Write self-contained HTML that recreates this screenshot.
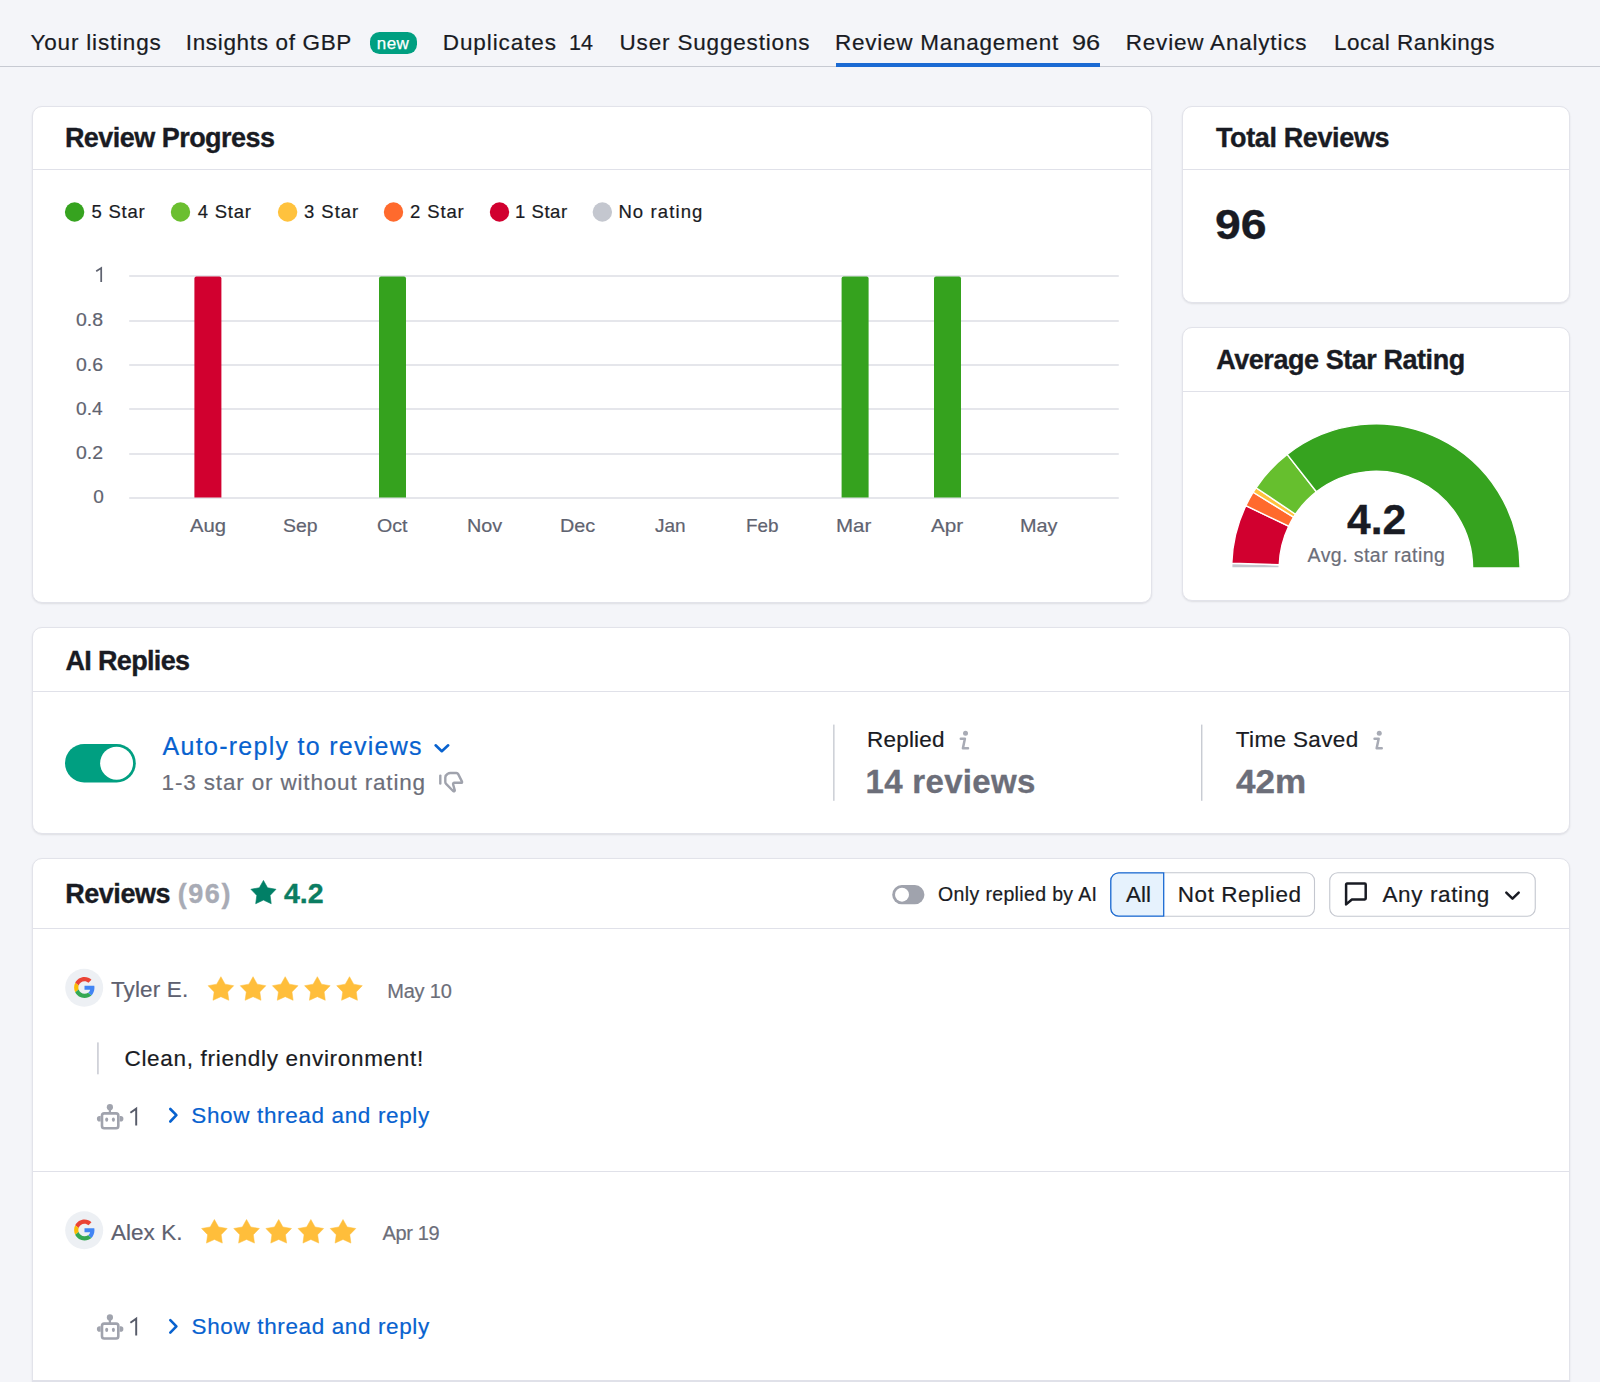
<!DOCTYPE html><html><head><meta charset="utf-8"><style>*{box-sizing:border-box;margin:0;padding:0}html,body{width:1600px;height:1382px;overflow:hidden;background:#f4f5f9;font-family:"Liberation Sans",sans-serif;color:#191b23}.b{position:absolute}.t{position:absolute;white-space:nowrap;line-height:1;font-family:"Liberation Sans",sans-serif}.card{position:absolute;background:#fff;border:1px solid #e2e3ea;border-radius:10px;box-shadow:0 1px 2px rgba(25,27,35,.10)}.hl{position:absolute;height:1px;background:#e0e1e9}svg{position:absolute;left:0;top:0;overflow:visible}</style></head><body>
<div class="b" style="left:0;top:66px;width:1600px;height:1px;background:#c7cad2"></div>
<div class="b" style="left:835.5px;top:63px;width:264px;height:4px;background:#1a6ad3"></div>
<div class="b" style="left:370.4px;top:32.1px;width:46.5px;height:22.0px;border-radius:9.5px;background:#009f81"></div>
<div class="card" style="left:32px;top:106px;width:1120px;height:497px"></div>
<div class="hl" style="left:33px;top:169px;width:1118px"></div>
<div class="card" style="left:1182px;top:106px;width:388px;height:197px"></div>
<div class="hl" style="left:1183px;top:169px;width:386px"></div>
<div class="card" style="left:1182px;top:327px;width:388px;height:274px"></div>
<div class="hl" style="left:1183px;top:391px;width:386px"></div>
<div class="card" style="left:32px;top:627px;width:1538px;height:207px"></div>
<div class="hl" style="left:33px;top:691px;width:1536px"></div>
<div class="card" style="left:32px;top:858px;width:1538px;height:523px;border-radius:10px 10px 0 0"></div>
<div class="hl" style="left:33px;top:928px;width:1536px"></div>
<div class="hl" style="left:33px;top:1171px;width:1536px"></div>
<div class="b" style="left:32px;top:1380px;width:1538px;height:2px;background:#e0e1e9"></div>
<svg width="1600" height="1382" viewBox="0 0 1600 1382">
<circle cx="74.6" cy="212" r="9.7" fill="#36a31f"/>
<circle cx="180.5" cy="212" r="9.7" fill="#6bbf30"/>
<circle cx="287.6" cy="212" r="9.7" fill="#ffc23d"/>
<circle cx="393.5" cy="212" r="9.7" fill="#ff6a2d"/>
<circle cx="499.5" cy="212" r="9.7" fill="#d1002f"/>
<circle cx="602.35" cy="212" r="9.7" fill="#c4c7cf"/>
<path d="M96.2,271.3 L101.2,268.1 V281.9" fill="none" stroke="#5f6370" stroke-width="1.75" stroke-linejoin="miter"/>
<path d="M130.4,1112.8 L136.2,1108.6 V1125.6" fill="none" stroke="#575b69" stroke-width="1.95"/>
<path d="M130.4,1322.8 L136.2,1318.6 V1335.6" fill="none" stroke="#575b69" stroke-width="1.95"/>
<line x1="129.2" x2="1118.75" y1="276.0" y2="276.0" stroke="#dcdee5" stroke-width="1.3"/>
<line x1="129.2" x2="1118.75" y1="321.0" y2="321.0" stroke="#dcdee5" stroke-width="1.3"/>
<line x1="129.2" x2="1118.75" y1="365.0" y2="365.0" stroke="#dcdee5" stroke-width="1.3"/>
<line x1="129.2" x2="1118.75" y1="409.0" y2="409.0" stroke="#dcdee5" stroke-width="1.3"/>
<line x1="129.2" x2="1118.75" y1="454.0" y2="454.0" stroke="#dcdee5" stroke-width="1.3"/>
<line x1="129.2" x2="1118.75" y1="498.0" y2="498.0" stroke="#dcdee5" stroke-width="1.3"/>
<path d="M194.4,497.5 V278.5 a2,2 0 0 1 2,-2 H219.4 a2,2 0 0 1 2,2 V497.5 Z" fill="#d1002f"/>
<path d="M379.0,497.5 V278.5 a2,2 0 0 1 2,-2 H404.0 a2,2 0 0 1 2,2 V497.5 Z" fill="#35a21e"/>
<path d="M841.6,497.5 V278.5 a2,2 0 0 1 2,-2 H866.6 a2,2 0 0 1 2,2 V497.5 Z" fill="#35a21e"/>
<path d="M934.0,497.5 V278.5 a2,2 0 0 1 2,-2 H959.0 a2,2 0 0 1 2,2 V497.5 Z" fill="#35a21e"/>
<g stroke="#fff" stroke-width="1.4" stroke-linejoin="miter">
<path d="M1231.70,568.00 A144.2,144.2 0 0 1 1231.78,563.22 L1279.25,564.79 A96.7,96.7 0 0 0 1279.20,568.00 Z" fill="#c4c7cf"/>
<path d="M1231.78,563.22 A144.2,144.2 0 0 1 1245.86,505.69 L1288.69,526.22 A96.7,96.7 0 0 0 1279.25,564.79 Z" fill="#d1002f"/>
<path d="M1245.86,505.69 A144.2,144.2 0 0 1 1253.21,492.23 L1293.63,517.19 A96.7,96.7 0 0 0 1288.69,526.22 Z" fill="#ff6a2d"/>
<path d="M1253.21,492.23 A144.2,144.2 0 0 1 1256.07,487.78 L1295.54,514.21 A96.7,96.7 0 0 0 1293.63,517.19 Z" fill="#ffc23d"/>
<path d="M1256.07,487.78 A144.2,144.2 0 0 1 1287.12,454.37 L1316.37,491.80 A96.7,96.7 0 0 0 1295.54,514.21 Z" fill="#66bf2e"/>
<path d="M1287.12,454.37 A144.2,144.2 0 0 1 1520.10,568.00 L1472.60,568.00 A96.7,96.7 0 0 0 1316.37,491.80 Z" fill="#36a31f"/>
</g>
<rect x="65" y="744.0" width="70.8" height="38.4" rx="19.2" fill="#009f81"/>
<circle cx="116.6" cy="763.2" r="16.5" fill="#fff"/>
<polyline points="435.6,745.3 441.8,751.2 448.2,745.3" fill="none" stroke="#0862cf" stroke-width="2.6" stroke-linecap="round" stroke-linejoin="round"/>
<g fill="none" stroke="#a0a3ad" stroke-width="2.4" stroke-linecap="round" stroke-linejoin="round"><line x1="440.3" y1="775.6" x2="440.3" y2="783.6"/><path d="M445.3,777.6 Q445.3,775.2 447.6,773.9 Q448.8,773 450.3,773 H456.4 Q457.6,773 458.2,774.1 L462,781.6 Q462.4,782.8 461.2,782.8 H454.4 Q452.8,782.8 453.1,784.4 L454.8,790.4 Q454.6,791.9 453.1,791.0 L446.1,783.9 Q445.3,783.1 445.3,782 Z"/></g>
<rect x="833.2" y="724.6" width="1.3" height="76.2" fill="#c4c7cf"/>
<rect x="1201.1" y="724.6" width="1.3" height="76.2" fill="#c4c7cf"/>
<g transform="translate(0,0)"><circle cx="965.5" cy="733.3" r="2.5" fill="#a8abb5"/><path d="M960.8,738.8 H964.9 L962.9,748.3 H968" fill="none" stroke="#a8abb5" stroke-width="2.5" stroke-linecap="round" stroke-linejoin="round"/></g>
<g transform="translate(413.75,0)"><circle cx="965.5" cy="733.3" r="2.5" fill="#a8abb5"/><path d="M960.8,738.8 H964.9 L962.9,748.3 H968" fill="none" stroke="#a8abb5" stroke-width="2.5" stroke-linecap="round" stroke-linejoin="round"/></g>
<polygon points="263.45,880.40 267.56,887.76 276.00,889.30 270.10,895.39 271.21,903.70 263.45,900.11 255.69,903.70 256.80,895.39 250.90,889.30 259.34,887.76" fill="#017f66" stroke="#017f66" stroke-width="0.6" stroke-linejoin="round"/>
<rect x="892.2" y="885.1" width="32.2" height="19.1" rx="9.55" fill="#a0a3ad"/>
<circle cx="902" cy="894.65" r="7" fill="#fff"/>
<rect x="1110.8" y="872.8" width="203.7" height="43.4" rx="8" fill="#fff" stroke="#c4c7cf" stroke-width="1.1"/>
<path d="M1163.7,872.8 H1118.8 a8,8 0 0 0 -8,8 V908.2 a8,8 0 0 0 8,8 H1163.7 Z" fill="#e6f2fd" stroke="#1a6ad3" stroke-width="1.3"/>
<rect x="1329.75" y="872.8" width="205.5" height="43.4" rx="8" fill="#fff" stroke="#c4c7cf" stroke-width="1.1"/>
<path d="M1346.1,904.4 V884.5 a0.9,0.9 0 0 1 0.9,-0.9 H1364.8 a0.9,0.9 0 0 1 0.9,0.9 V898.6 a0.9,0.9 0 0 1 -0.9,0.9 H1351.9 Z" fill="none" stroke="#191b23" stroke-width="2.5" stroke-linejoin="round"/>
<polyline points="1506.3,892.6 1512.5,898.7 1518.7,892.6" fill="none" stroke="#191b23" stroke-width="2.5" stroke-linecap="round" stroke-linejoin="round"/>
<circle cx="84.2" cy="987.7" r="19" fill="#edf0f4"/>
<g transform="translate(74.1,977.1) scale(0.4333)"><path fill="#EA4335" d="M24 9.5c3.54 0 6.71 1.22 9.21 3.6l6.85-6.85C35.9 2.38 30.47 0 24 0 14.62 0 6.51 5.38 2.56 13.22l7.98 6.19C12.43 13.72 17.74 9.5 24 9.5z"/><path fill="#4285F4" d="M46.98 24.55c0-1.57-.15-3.09-.38-4.55H24v9.02h12.94c-.58 2.96-2.26 5.480-4.78 7.18l7.73 6c4.51-4.18 7.09-10.36 7.09-17.65z"/><path fill="#FBBC05" d="M10.53 28.59c-.48-1.45-.76-2.99-.76-4.59s.27-3.14.76-4.59l-7.98-6.19C.92 16.46 0 20.12 0 24c0 3.88.92 7.54 2.56 10.780l7.97-6.19z"/><path fill="#34A853" d="M24 48c6.48 0 11.930-2.13 15.89-5.81l-7.73-6c-2.15 1.45-4.92 2.3-8.16 2.3-6.26 0-11.57-4.22-13.470-9.91l-7.98 6.19C6.51 42.62 14.62 48 24 48z"/></g>
<polygon points="220.90,976.70 225.09,984.15 233.70,985.71 227.68,991.88 228.81,1000.30 220.90,996.66 212.99,1000.30 214.12,991.88 208.10,985.71 216.71,984.15" fill="#ffbe3b" stroke="#ffbe3b" stroke-width="0.5" stroke-linejoin="round"/>
<polygon points="253.05,976.70 257.24,984.15 265.85,985.71 259.83,991.88 260.96,1000.30 253.05,996.66 245.14,1000.30 246.27,991.88 240.25,985.71 248.86,984.15" fill="#ffbe3b" stroke="#ffbe3b" stroke-width="0.5" stroke-linejoin="round"/>
<polygon points="285.20,976.70 289.39,984.15 298.00,985.71 291.98,991.88 293.11,1000.30 285.20,996.66 277.29,1000.30 278.42,991.88 272.40,985.71 281.01,984.15" fill="#ffbe3b" stroke="#ffbe3b" stroke-width="0.5" stroke-linejoin="round"/>
<polygon points="317.35,976.70 321.54,984.15 330.15,985.71 324.13,991.88 325.26,1000.30 317.35,996.66 309.44,1000.30 310.57,991.88 304.55,985.71 313.16,984.15" fill="#ffbe3b" stroke="#ffbe3b" stroke-width="0.5" stroke-linejoin="round"/>
<polygon points="349.50,976.70 353.69,984.15 362.30,985.71 356.28,991.88 357.41,1000.30 349.50,996.66 341.59,1000.30 342.72,991.88 336.70,985.71 345.31,984.15" fill="#ffbe3b" stroke="#ffbe3b" stroke-width="0.5" stroke-linejoin="round"/>
<rect x="97" y="1042.4" width="1.8" height="31.9" fill="#d0d2d9"/>
<g transform="translate(0,0.00)" fill="#a0a3ad"><circle cx="109.9" cy="1107.2" r="3.1"/><rect x="108.8" y="1108" width="2.2" height="5"/><rect x="102" y="1113.4" width="16.3" height="14.8" rx="2.2" fill="none" stroke="#a0a3ad" stroke-width="2.6"/><path d="M100.7,1116 h-1.2 a2.6,2.8 0 0 0 0,5.6 h1.2 Z"/><path d="M119.6,1116 h1.2 a2.6,2.8 0 0 1 0,5.6 h-1.2 Z"/><ellipse cx="106.7" cy="1119.6" rx="1.5" ry="2.2"/><ellipse cx="113.4" cy="1119.6" rx="1.5" ry="2.2"/></g>
<polyline points="170.3,1109.0 176.4,1115.2 170.3,1121.5" fill="none" stroke="#0862cf" stroke-width="2.6" stroke-linecap="round" stroke-linejoin="round"/>
<circle cx="84.2" cy="1230.2" r="19" fill="#edf0f4"/>
<g transform="translate(74.1,1219.6000000000001) scale(0.4333)"><path fill="#EA4335" d="M24 9.5c3.54 0 6.71 1.22 9.21 3.6l6.85-6.85C35.9 2.38 30.47 0 24 0 14.62 0 6.51 5.38 2.56 13.22l7.98 6.19C12.43 13.72 17.74 9.5 24 9.5z"/><path fill="#4285F4" d="M46.98 24.55c0-1.57-.15-3.09-.38-4.55H24v9.02h12.94c-.58 2.96-2.26 5.480-4.78 7.18l7.73 6c4.51-4.18 7.09-10.36 7.09-17.65z"/><path fill="#FBBC05" d="M10.53 28.59c-.48-1.45-.76-2.99-.76-4.59s.27-3.14.76-4.59l-7.98-6.19C.92 16.46 0 20.12 0 24c0 3.88.92 7.54 2.56 10.780l7.97-6.19z"/><path fill="#34A853" d="M24 48c6.48 0 11.930-2.13 15.89-5.81l-7.73-6c-2.15 1.45-4.92 2.3-8.16 2.3-6.26 0-11.57-4.22-13.470-9.91l-7.98 6.19C6.51 42.62 14.62 48 24 48z"/></g>
<polygon points="214.40,1219.50 218.59,1226.95 227.20,1228.51 221.18,1234.68 222.31,1243.10 214.40,1239.46 206.49,1243.10 207.62,1234.68 201.60,1228.51 210.21,1226.95" fill="#ffbe3b" stroke="#ffbe3b" stroke-width="0.5" stroke-linejoin="round"/>
<polygon points="246.55,1219.50 250.74,1226.95 259.35,1228.51 253.33,1234.68 254.46,1243.10 246.55,1239.46 238.64,1243.10 239.77,1234.68 233.75,1228.51 242.36,1226.95" fill="#ffbe3b" stroke="#ffbe3b" stroke-width="0.5" stroke-linejoin="round"/>
<polygon points="278.70,1219.50 282.89,1226.95 291.50,1228.51 285.48,1234.68 286.61,1243.10 278.70,1239.46 270.79,1243.10 271.92,1234.68 265.90,1228.51 274.51,1226.95" fill="#ffbe3b" stroke="#ffbe3b" stroke-width="0.5" stroke-linejoin="round"/>
<polygon points="310.85,1219.50 315.04,1226.95 323.65,1228.51 317.63,1234.68 318.76,1243.10 310.85,1239.46 302.94,1243.10 304.07,1234.68 298.05,1228.51 306.66,1226.95" fill="#ffbe3b" stroke="#ffbe3b" stroke-width="0.5" stroke-linejoin="round"/>
<polygon points="343.00,1219.50 347.19,1226.95 355.80,1228.51 349.78,1234.68 350.91,1243.10 343.00,1239.46 335.09,1243.10 336.22,1234.68 330.20,1228.51 338.81,1226.95" fill="#ffbe3b" stroke="#ffbe3b" stroke-width="0.5" stroke-linejoin="round"/>
<g transform="translate(0,210.25)" fill="#a0a3ad"><circle cx="109.9" cy="1107.2" r="3.1"/><rect x="108.8" y="1108" width="2.2" height="5"/><rect x="102" y="1113.4" width="16.3" height="14.8" rx="2.2" fill="none" stroke="#a0a3ad" stroke-width="2.6"/><path d="M100.7,1116 h-1.2 a2.6,2.8 0 0 0 0,5.6 h1.2 Z"/><path d="M119.6,1116 h1.2 a2.6,2.8 0 0 1 0,5.6 h-1.2 Z"/><ellipse cx="106.7" cy="1119.6" rx="1.5" ry="2.2"/><ellipse cx="113.4" cy="1119.6" rx="1.5" ry="2.2"/></g>
<polyline points="170.3,1320.1 176.4,1326.3 170.3,1332.6" fill="none" stroke="#0862cf" stroke-width="2.6" stroke-linecap="round" stroke-linejoin="round"/>
</svg>
<div class="t" style="left:30.50px;top:32.20px;font-size:22.5px;-webkit-text-stroke:0.2px #191b23;letter-spacing:0.814px;color:#191b23;">Your listings</div>
<div class="t" style="left:185.75px;top:32.20px;font-size:22.5px;-webkit-text-stroke:0.2px #191b23;letter-spacing:0.659px;color:#191b23;">Insights of GBP</div>
<div class="t" style="left:442.75px;top:32.20px;font-size:22.5px;-webkit-text-stroke:0.2px #191b23;letter-spacing:0.911px;color:#191b23;">Duplicates</div>
<div class="t" style="left:569.04px;top:32.20px;font-size:22.5px;transform:scaleX(0.9569);transform-origin:0 0;-webkit-text-stroke:0.2px #191b23;color:#191b23;">14</div>
<div class="t" style="left:619.50px;top:32.20px;font-size:22.5px;-webkit-text-stroke:0.2px #191b23;letter-spacing:0.827px;color:#191b23;">User Suggestions</div>
<div class="t" style="left:834.90px;top:32.20px;font-size:22.5px;-webkit-text-stroke:0.2px #191b23;letter-spacing:0.750px;color:#191b23;">Review Management</div>
<div class="t" style="left:1071.88px;top:32.20px;font-size:22.5px;transform:scaleX(1.1228);transform-origin:0 0;-webkit-text-stroke:0.2px #191b23;color:#191b23;">96</div>
<div class="t" style="left:1125.75px;top:32.20px;font-size:22.5px;-webkit-text-stroke:0.2px #191b23;letter-spacing:0.796px;color:#191b23;">Review Analytics</div>
<div class="t" style="left:1334.00px;top:32.20px;font-size:22.5px;-webkit-text-stroke:0.2px #191b23;letter-spacing:0.512px;color:#191b23;">Local Rankings</div>
<div class="t" style="left:376.70px;top:34.80px;font-size:17px;letter-spacing:0.495px;color:#ffffff;-webkit-text-stroke:0.25px #fff;">new</div>
<div class="t" style="left:64.90px;top:125.30px;font-size:27px;font-weight:bold;-webkit-text-stroke:0.35px #191b23;letter-spacing:-0.535px;color:#191b23;">Review Progress</div>
<div class="t" style="left:1216.00px;top:125.30px;font-size:27px;font-weight:bold;-webkit-text-stroke:0.35px #191b23;letter-spacing:-0.378px;color:#191b23;">Total Reviews</div>
<div class="t" style="left:1214.90px;top:204.00px;font-size:42px;transform:scaleX(1.1046);transform-origin:0 0;font-weight:bold;-webkit-text-stroke:0.35px #191b23;color:#191b23;">96</div>
<div class="t" style="left:1216.20px;top:347.00px;font-size:27px;font-weight:bold;-webkit-text-stroke:0.35px #191b23;letter-spacing:-0.449px;color:#191b23;">Average Star Rating</div>
<div class="t" style="left:65.50px;top:648.00px;font-size:27px;font-weight:bold;-webkit-text-stroke:0.35px #191b23;letter-spacing:-0.670px;color:#191b23;">AI Replies</div>
<div class="t" style="left:65.20px;top:881.40px;font-size:27px;font-weight:bold;-webkit-text-stroke:0.35px #191b23;letter-spacing:-0.450px;color:#191b23;">Reviews</div>
<div class="t" style="left:91.60px;top:203.00px;font-size:18.5px;-webkit-text-stroke:0.2px #191b23;letter-spacing:0.741px;color:#191b23;">5 Star</div>
<div class="t" style="left:197.70px;top:203.00px;font-size:18.5px;-webkit-text-stroke:0.2px #191b23;letter-spacing:0.781px;color:#191b23;">4 Star</div>
<div class="t" style="left:304.00px;top:203.00px;font-size:18.5px;-webkit-text-stroke:0.2px #191b23;letter-spacing:0.961px;color:#191b23;">3 Star</div>
<div class="t" style="left:410.00px;top:203.00px;font-size:18.5px;-webkit-text-stroke:0.2px #191b23;letter-spacing:0.881px;color:#191b23;">2 Star</div>
<div class="t" style="left:515.10px;top:203.00px;font-size:18.5px;-webkit-text-stroke:0.2px #191b23;letter-spacing:0.521px;color:#191b23;">1 Star</div>
<div class="t" style="left:618.40px;top:203.00px;font-size:18.5px;-webkit-text-stroke:0.2px #191b23;letter-spacing:1.115px;color:#191b23;">No rating</div>
<div class="t" style="left:76.30px;top:310.20px;font-size:19px;transform:scaleX(1.0234);transform-origin:0 0;-webkit-text-stroke:0.2px #5f6370;color:#5f6370;">0.8</div>
<div class="t" style="left:76.30px;top:354.50px;font-size:19px;transform:scaleX(1.0234);transform-origin:0 0;-webkit-text-stroke:0.2px #5f6370;color:#5f6370;">0.6</div>
<div class="t" style="left:75.75px;top:398.80px;font-size:19px;transform:scaleX(1.0057);transform-origin:0 0;-webkit-text-stroke:0.2px #5f6370;color:#5f6370;">0.4</div>
<div class="t" style="left:76.30px;top:443.10px;font-size:19px;transform:scaleX(1.0234);transform-origin:0 0;-webkit-text-stroke:0.2px #5f6370;color:#5f6370;">0.2</div>
<div class="t" style="left:93.25px;top:487.40px;font-size:19px;-webkit-text-stroke:0.2px #5f6370;color:#5f6370;">0</div>
<div class="t" style="left:190.18px;top:516.00px;font-size:19px;transform:scaleX(1.0665);transform-origin:0 0;-webkit-text-stroke:0.2px #5f6370;color:#5f6370;">Aug</div>
<div class="t" style="left:283.35px;top:516.00px;font-size:19px;transform:scaleX(1.0229);transform-origin:0 0;-webkit-text-stroke:0.2px #5f6370;color:#5f6370;">Sep</div>
<div class="t" style="left:377.18px;top:516.00px;font-size:19px;transform:scaleX(1.0321);transform-origin:0 0;-webkit-text-stroke:0.2px #5f6370;color:#5f6370;">Oct</div>
<div class="t" style="left:466.86px;top:516.00px;font-size:19px;transform:scaleX(1.0424);transform-origin:0 0;-webkit-text-stroke:0.2px #5f6370;color:#5f6370;">Nov</div>
<div class="t" style="left:559.86px;top:516.00px;font-size:19px;transform:scaleX(1.0406);transform-origin:0 0;-webkit-text-stroke:0.2px #5f6370;color:#5f6370;">Dec</div>
<div class="t" style="left:655.15px;top:516.00px;font-size:19px;transform:scaleX(0.9978);transform-origin:0 0;-webkit-text-stroke:0.2px #5f6370;color:#5f6370;">Jan</div>
<div class="t" style="left:746.11px;top:516.00px;font-size:19px;transform:scaleX(0.9945);transform-origin:0 0;-webkit-text-stroke:0.2px #5f6370;color:#5f6370;">Feb</div>
<div class="t" style="left:836.47px;top:516.00px;font-size:19px;transform:scaleX(1.0804);transform-origin:0 0;-webkit-text-stroke:0.2px #5f6370;color:#5f6370;">Mar</div>
<div class="t" style="left:931.00px;top:516.00px;font-size:19px;transform:scaleX(1.0913);transform-origin:0 0;-webkit-text-stroke:0.2px #5f6370;color:#5f6370;">Apr</div>
<div class="t" style="left:1020.40px;top:516.00px;font-size:19px;transform:scaleX(1.0454);transform-origin:0 0;-webkit-text-stroke:0.2px #5f6370;color:#5f6370;">May</div>
<div class="t" style="left:1347.40px;top:499.20px;font-size:42px;transform:scaleX(1.0135);transform-origin:0 0;font-weight:bold;-webkit-text-stroke:0.35px #191b23;color:#191b23;">4.2</div>
<div class="t" style="left:1307.60px;top:545.90px;font-size:19.5px;-webkit-text-stroke:0.2px #6c6e79;letter-spacing:0.431px;color:#6c6e79;">Avg. star rating</div>
<div class="t" style="left:162.60px;top:734.00px;font-size:25px;-webkit-text-stroke:0.2px #0862cf;letter-spacing:1.279px;color:#0862cf;">Auto-reply to reviews</div>
<div class="t" style="left:161.60px;top:771.60px;font-size:22.5px;-webkit-text-stroke:0.2px #6c6e79;letter-spacing:0.836px;color:#6c6e79;">1-3 star or without rating</div>
<div class="t" style="left:867.10px;top:729.40px;font-size:22.5px;-webkit-text-stroke:0.2px #191b23;letter-spacing:0.169px;color:#191b23;">Replied</div>
<div class="t" style="left:865.60px;top:765.20px;font-size:33px;font-weight:bold;-webkit-text-stroke:0.35px #6c6e79;letter-spacing:0.299px;color:#6c6e79;">14 reviews</div>
<div class="t" style="left:1235.85px;top:729.40px;font-size:22.5px;-webkit-text-stroke:0.2px #191b23;letter-spacing:0.345px;color:#191b23;">Time Saved</div>
<div class="t" style="left:1235.85px;top:765.20px;font-size:33px;transform:scaleX(1.0625);transform-origin:0 0;font-weight:bold;-webkit-text-stroke:0.35px #6c6e79;color:#6c6e79;">42m</div>
<div class="t" style="left:177.80px;top:881.40px;font-size:27px;font-weight:bold;-webkit-text-stroke:0.35px #a8abb5;letter-spacing:1.526px;color:#a8abb5;">(96)</div>
<div class="t" style="left:284.30px;top:881.40px;font-size:27px;transform:scaleX(1.0570);transform-origin:0 0;font-weight:bold;-webkit-text-stroke:0.35px #0b7d62;color:#0b7d62;">4.2</div>
<div class="t" style="left:938.10px;top:885.00px;font-size:19.5px;-webkit-text-stroke:0.2px #191b23;letter-spacing:0.354px;color:#191b23;">Only replied by AI</div>
<div class="t" style="left:1125.60px;top:884.00px;font-size:22.5px;transform:scaleX(0.9935);transform-origin:0 0;-webkit-text-stroke:0.2px #191b23;color:#191b23;">All</div>
<div class="t" style="left:1177.75px;top:884.00px;font-size:22.5px;-webkit-text-stroke:0.2px #191b23;letter-spacing:0.570px;color:#191b23;">Not Replied</div>
<div class="t" style="left:1382.50px;top:884.00px;font-size:22.5px;-webkit-text-stroke:0.2px #191b23;letter-spacing:0.606px;color:#191b23;">Any rating</div>
<div class="t" style="left:110.90px;top:979.20px;font-size:22.5px;-webkit-text-stroke:0.2px #5e6170;letter-spacing:0.141px;color:#5e6170;">Tyler E.</div>
<div class="t" style="left:387.20px;top:980.70px;font-size:20px;-webkit-text-stroke:0.2px #6c6e79;letter-spacing:-0.193px;color:#6c6e79;">May 10</div>
<div class="t" style="left:124.50px;top:1048.00px;font-size:22.5px;-webkit-text-stroke:0.2px #191b23;letter-spacing:0.686px;color:#191b23;">Clean, friendly environment!</div>
<div class="t" style="left:191.30px;top:1104.90px;font-size:22.5px;-webkit-text-stroke:0.2px #0862cf;letter-spacing:0.640px;color:#0862cf;">Show thread and reply</div>
<div class="t" style="left:110.90px;top:1222.20px;font-size:22.5px;-webkit-text-stroke:0.2px #5e6170;letter-spacing:0.070px;color:#5e6170;">Alex K.</div>
<div class="t" style="left:382.50px;top:1223.20px;font-size:20px;-webkit-text-stroke:0.2px #6c6e79;letter-spacing:-0.381px;color:#6c6e79;">Apr 19</div>
<div class="t" style="left:191.60px;top:1316.00px;font-size:22.5px;-webkit-text-stroke:0.2px #0862cf;letter-spacing:0.625px;color:#0862cf;">Show thread and reply</div>
</body></html>
